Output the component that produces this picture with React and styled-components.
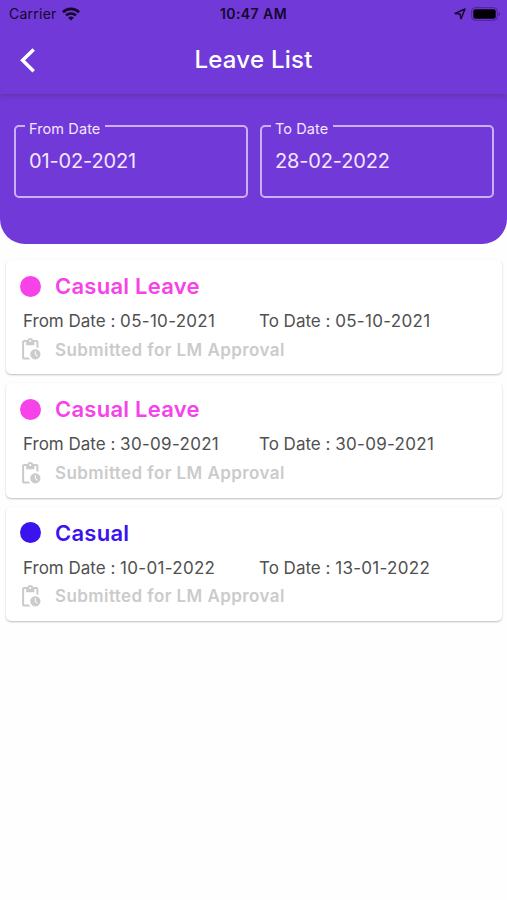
import React from "react";
import styled, { createGlobalStyle } from "styled-components";

const GlobalStyle = createGlobalStyle`
  *, *::before, *::after { box-sizing: border-box; }
  body {
    margin: 0;
    background: #fefefe;
    font-family: Inter, "Liberation Sans", sans-serif;
    overflow: hidden;
  }
`;

const Screen = styled.main`
  display: flex;
  flex-direction: column;
  width: 507px;
  height: 900px;
  background: #fefefe;
`;

const AppBar = styled.header`
  position: relative;
  height: 94px;
  background: #7139d8;
  box-shadow: 0 2px 5px rgba(70, 50, 80, 0.36);
`;

const StatusBar = styled.div`
  display: grid;
  grid-template-columns: 1fr auto 1fr;
  align-items: center;
  height: 28px;
  padding: 0 6px 0 9px;
  color: #13072b;
`;

const Carrier = styled.div`
  display: flex;
  align-items: center;
  gap: 5px;
  font-size: 14px;
  letter-spacing: 0.25px;
  line-height: 28px;
`;

const Clock = styled.div`
  margin-right: 3px;
  font-size: 14px;
  font-weight: 600;
  letter-spacing: 0.45px;
  line-height: 28px;
`;

const Indicators = styled.div`
  display: flex;
  align-items: center;
  justify-content: flex-end;
  gap: 5px;
`;

const TitleBar = styled.div`
  display: grid;
  grid-template-columns: 60px 1fr 60px;
  align-items: center;
  height: 64px;
`;

const BackButton = styled.button`
  display: flex;
  width: 40px;
  height: 40px;
  padding: 7.5px 0 0 20px;
  border: 0;
  background: none;
  color: #fff;
`;

const Title = styled.h1`
  margin: 0;
  color: #fff;
  font-size: 24px;
  font-weight: 500;
  letter-spacing: 0.25px;
  line-height: 64px;
  text-align: center;
`;

const Filters = styled.section`
  display: grid;
  grid-template-columns: 234px 234px;
  gap: 12px;
  align-items: start;
  height: 149.5px;
  padding: 19.5px 14px 0;
  border-radius: 0 0 25px 25px;
  background: #7139d8;
`;

const DateField = styled.fieldset`
  min-width: 0;
  height: 84px;
  margin: 0;
  padding: 0 0 0 13px;
  border: 2px solid #cdb0f4;
  border-radius: 5px;
  color: #f4e6ff;
`;

const FieldLabel = styled.legend`
  margin-left: -4px;
  padding: 6px 5px 0 4px;
  font-size: 14.5px;
  letter-spacing: 0.1px;
  line-height: 18px;
`;

const FieldValue = styled.div`
  margin-top: 9px;
  font-size: 20px;
  letter-spacing: -0.15px;
  line-height: 28px;
`;

const LeaveCards = styled.ul`
  display: flex;
  flex-direction: column;
  gap: 9px;
  margin: 0;
  padding: 16.5px 5px 0 6px;
  list-style: none;
`;

const Card = styled.li`
  height: 114.4px;
  padding: 11px 14px 0;
  border-radius: 5px;
  background: #fff;
  box-shadow: 0 1px 2px rgba(0, 0, 0, 0.26);
`;

const CardHeading = styled.div`
  display: flex;
  align-items: center;
  gap: 14px;
  height: 30px;
  color: ${(p) => p.$tone};
`;

const Dot = styled.span`
  width: 21px;
  height: 21px;
  border-radius: 50%;
  background: currentColor;
`;

const LeaveType = styled.h2`
  margin: 0;
  font-size: 22px;
  font-weight: 600;
  letter-spacing: 0.25px;
  line-height: 30px;
`;

const DateRow = styled.div`
  display: grid;
  grid-template-columns: 236px 1fr;
  margin-top: 8px;
  padding-left: 3px;
  color: #505050;
  font-size: 17px;
  line-height: 24px;
  white-space: nowrap;
`;

const DateValue = styled.span`
  letter-spacing: 0.3px;
`;

const StatusRow = styled.div`
  display: flex;
  align-items: center;
  gap: 12.5px;
  height: 26px;
  margin: 3.6px 0 0 -2px;
  color: #cbcbcb;
  font-size: 17px;
  font-weight: 600;
  letter-spacing: 0.42px;
  line-height: 26px;
`;

const WifiIcon = () => (
  <svg width="18" height="14" viewBox="0 0 18 14" fill="none" stroke="currentColor">
    <path d="M1 5.2a11.5 11.5 0 0 1 16 0" strokeWidth="2.7" />
    <path d="M4 8.4a7.2 7.2 0 0 1 10 0" strokeWidth="2.5" />
    <path d="M9 13.6 6.2 10.7a4.1 4.1 0 0 1 5.6 0Z" fill="currentColor" stroke="none" />
  </svg>
);

const LocationIcon = () => (
  <svg width="12" height="12" viewBox="0 0 12 12" fill="none" stroke="currentColor" strokeWidth="1.5" strokeLinejoin="round">
    <path d="M11 1 7 10.8 6 6.1 1.1 5.4Z" />
  </svg>
);

const BatteryIcon = () => (
  <svg width="30" height="14" viewBox="0 0 30 14">
    <rect x="0.7" y="0.7" width="25.6" height="12.6" rx="3.5" fill="none" stroke="#4a2393" strokeWidth="1" />
    <rect x="2.3" y="2.3" width="22.4" height="9.4" rx="2" fill="#030008" />
    <path d="M27.7 5v4c1.7-.6 1.7-3.4 0-4Z" fill="#4a2393" />
  </svg>
);

const BackIcon = () => (
  <svg width="16" height="25" viewBox="0 0 16 25" fill="none" stroke="currentColor" strokeWidth="3.5">
    <path d="M13.7 1.4 2.6 12.3l11.1 10.9" />
  </svg>
);

const PendingIcon = () => (
  <svg width="24.5" height="24.5" viewBox="0 0 24 24" fill="currentColor">
    <path d="M17 12c-2.76 0-5 2.24-5 5s2.24 5 5 5 5-2.24 5-5-2.24-5-5-5zm1.65 7.35L16.5 17.2V14h1v2.79l1.85 1.85-.7.71zM18 3h-3.18C14.4 1.84 13.3 1 12 1s-2.4.84-2.82 2H6c-1.1 0-2 .9-2 2v15c0 1.1.9 2 2 2h6.11a6.743 6.743 0 0 1-1.42-2H6V5h2v3h8V5h2v5.08c.71.1 1.38.31 2 .6V5c0-1.1-.9-2-2-2zm-6 2c-.55 0-1-.45-1-1s.45-1 1-1 1 .45 1 1-.45 1-1 1z" />
  </svg>
);

const leaves = [
  { type: "Casual Leave", tone: "#f642e8", from: "05-10-2021", to: "05-10-2021" },
  { type: "Casual Leave", tone: "#f642e8", from: "30-09-2021", to: "30-09-2021" },
  { type: "Casual", tone: "#3b13ee", from: "10-01-2022", to: "13-01-2022" },
];

export default function App() {
  return (
    <Screen>
      <GlobalStyle />
      <AppBar>
        <StatusBar>
          <Carrier>
            <span>Carrier</span>
            <WifiIcon />
          </Carrier>
          <Clock>10:47 AM</Clock>
          <Indicators>
            <LocationIcon />
            <BatteryIcon />
          </Indicators>
        </StatusBar>
        <TitleBar>
          <BackButton aria-label="Back">
            <BackIcon />
          </BackButton>
          <Title>Leave List</Title>
        </TitleBar>
      </AppBar>
      <Filters>
        <DateField>
          <FieldLabel>From Date</FieldLabel>
          <FieldValue>01-02-2021</FieldValue>
        </DateField>
        <DateField>
          <FieldLabel>To Date</FieldLabel>
          <FieldValue>28-02-2022</FieldValue>
        </DateField>
      </Filters>
      <LeaveCards>
        {leaves.map((leave, i) => (
          <Card key={i}>
            <CardHeading $tone={leave.tone}>
              <Dot />
              <LeaveType>{leave.type}</LeaveType>
            </CardHeading>
            <DateRow>
              <span>
                From Date : <DateValue>{leave.from}</DateValue>
              </span>
              <span>
                To Date : <DateValue>{leave.to}</DateValue>
              </span>
            </DateRow>
            <StatusRow>
              <PendingIcon />
              <span>Submitted for LM Approval</span>
            </StatusRow>
          </Card>
        ))}
      </LeaveCards>
    </Screen>
  );
}
